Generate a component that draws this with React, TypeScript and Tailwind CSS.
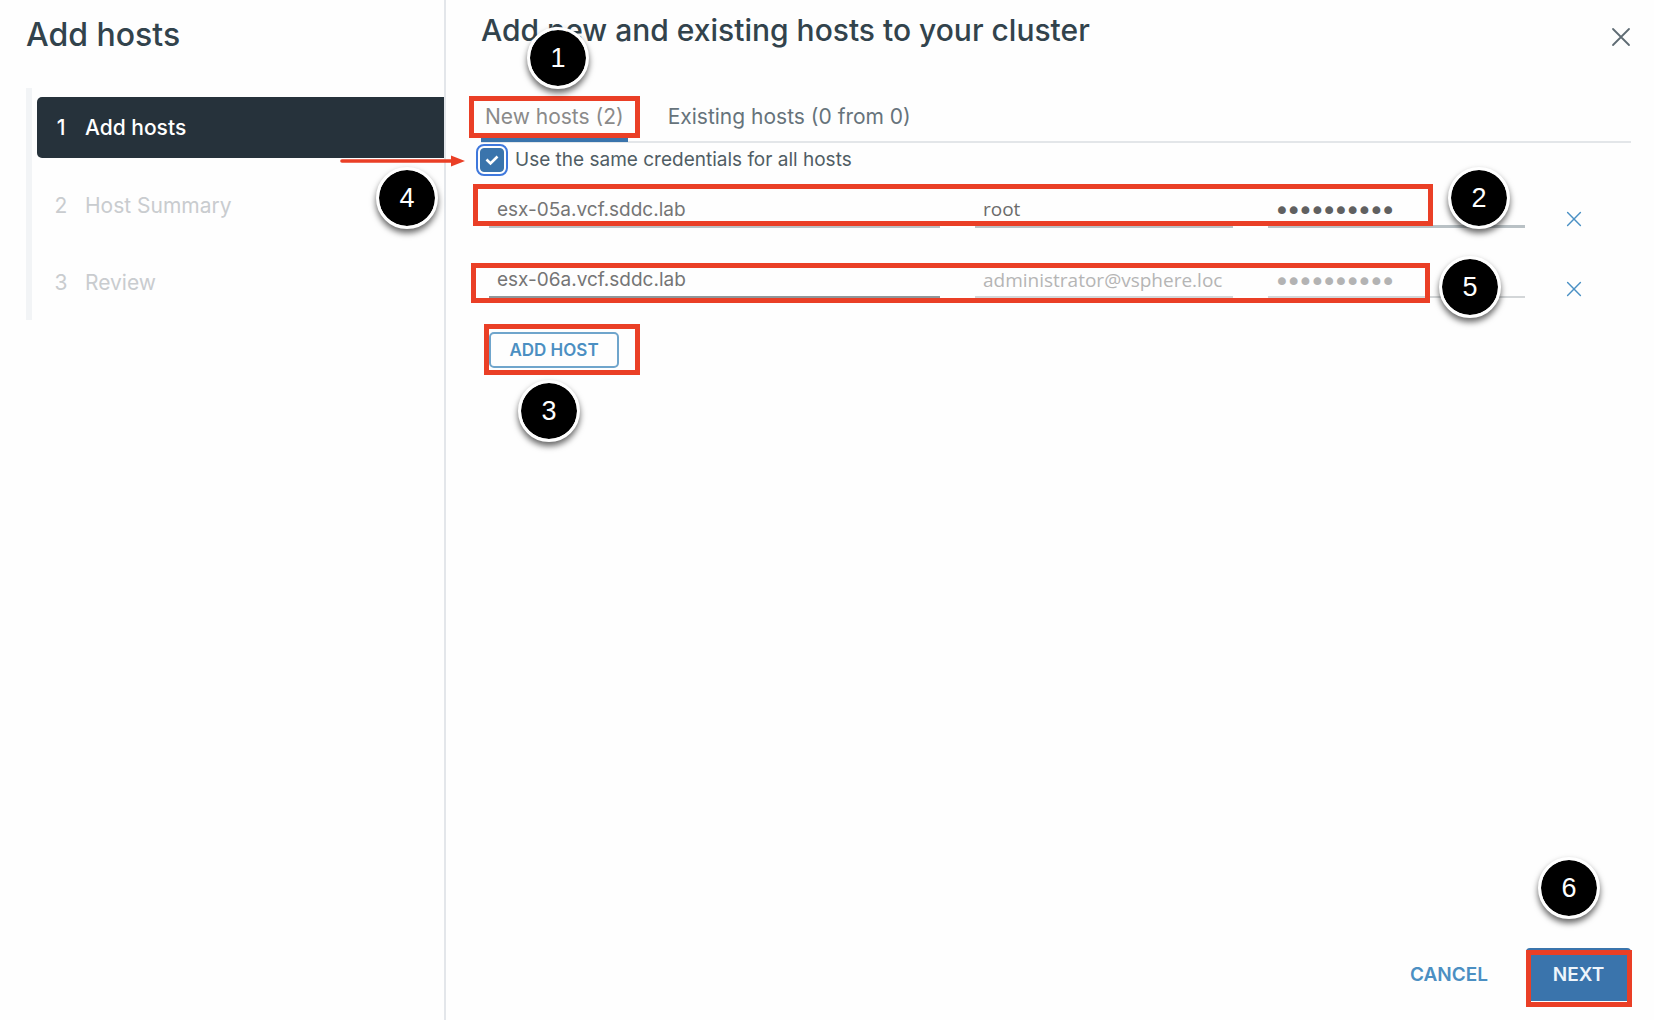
import { useState } from "react";

function Callout({ n, className }: { n: number; className: string }) {
  return (
    <span
      className={`absolute z-20 flex size-[62px] items-center justify-center rounded-full border-[3px] border-white bg-black bg-clip-padding pt-px font-['Liberation_Sans',Arial,sans-serif] text-[27px] leading-none font-normal text-white shadow-[0_4px_6px_rgba(0,0,0,0.6)] ${className}`}
    >
      {n}
    </span>
  );
}

function Outline({ className }: { className: string }) {
  return (
    <span
      aria-hidden="true"
      className={`pointer-events-none absolute z-10 border-[5px] border-[#ea3f26] ${className}`}
    />
  );
}

function Cross({ className }: { className: string }) {
  return (
    <svg viewBox="0 0 20 20" className={className} fill="none" stroke="currentColor" strokeLinecap="round" aria-hidden="true">
      <path d="M2 2L18 18M18 2L2 18" />
    </svg>
  );
}

const steps = ["Add hosts", "Host Summary", "Review"];

type Host = { name: string; user: string; password: string; inherited: boolean };

const initialHosts: Host[] = [
  { name: "esx-05a.vcf.sddc.lab", user: "root", password: "Password1!", inherited: false },
  { name: "esx-06a.vcf.sddc.lab", user: "", password: "", inherited: true },
];

function HostRow({ host, index, onRemove }: { host: Host; index: number; onRemove: () => void }) {
  const field = "h-[47px] w-full min-w-0 rounded-none bg-transparent pr-2.5 pl-2 outline-none placeholder:opacity-100";
  const line = host.inherited ? "border-b-2 border-[#d3d6d8]" : "border-b-[3px] border-[#b9c1c5]";
  const nameLine = host.inherited ? "border-b-2 border-[#8f979b]" : "border-b-[3px] border-[#b9c1c5]";
  return (
    <div className="relative grid h-[70px] grid-cols-[451fr_258fr_257fr_71fr] items-start gap-x-[35px]">
      <input
        aria-label={`Host ${index + 1} name`}
        defaultValue={host.name}
        className={`${field} ${nameLine} pt-3 font-['Inter',sans-serif] text-[19px] text-[#757575]`}
      />
      <input
        aria-label={`Host ${index + 1} user name`}
        defaultValue={host.user}
        placeholder="administrator@vsphere.local"
        disabled={host.inherited}
        className={`${field} ${line} pt-3 font-['Open_Sans',sans-serif] text-[19px] text-[#6b6b6b] placeholder:text-[#b5b5b5]`}
      />
      <input
        type="password"
        aria-label={`Host ${index + 1} password`}
        defaultValue={host.inherited ? "Password1!" : host.password}
        disabled={host.inherited}
        className={`${field} ${line} pt-3.5 font-['DejaVu_Sans',sans-serif] text-[20px] [-webkit-text-stroke:2px] ${host.inherited ? "text-[#b3b3b3]" : "text-[#606060]"}`}
      />
      <button
        type="button"
        aria-label={`Remove host ${index + 1}`}
        onClick={onRemove}
        className="mt-6 flex size-7 items-center justify-center text-[#4a90c4]"
      >
        <Cross className="size-4 stroke-[1.8]" />
      </button>
      {index === 0 && (
        <>
          <Outline className="top-[3px] -left-4 right-[198px] h-[42px]" />
          <Callout n={2} className="-top-3.5 right-[121px]" />
        </>
      )}
      {index === 1 && (
        <>
          <Outline className="top-3 -left-[18px] right-[201px] h-10" />
          <Callout n={5} className="top-[5px] right-[130px]" />
        </>
      )}
    </div>
  );
}

export default function App() {
  const [same, setSame] = useState(true);
  const [hosts, setHosts] = useState(initialHosts);

  return (
    <div className="flex min-h-screen bg-[#fefefe] font-['Inter',sans-serif] text-[#32434c]">
      <aside className="w-[446px] shrink-0 border-r-2 border-[#e3e6ea] pl-[26px]">
        <h1 className="pt-4 text-[32px] leading-[38px] font-medium">Add hosts</h1>
        <ol className="relative mt-[34px] flex h-[232px] flex-col gap-4 border-l-[6px] border-[#f2f4f6] pt-[9px] pl-[5px]">
          {steps.map((s, i) => (
            <li key={s}>
              <button
                type="button"
                disabled={i > 0}
                className={
                  i === 0
                    ? "flex h-[61px] w-full items-center rounded-l-[5px] bg-[#26323b] text-left text-[21px] font-medium text-white"
                    : "flex h-[61px] w-full items-center pt-0.5 text-left text-[21px] text-[#c9cccf]"
                }
              >
                <span className="w-12 px-4 text-center">{i + 1}</span>
                <span>{s}</span>
              </button>
            </li>
          ))}
          <Callout n={4} className="top-[79px] right-1.5" />
        </ol>
      </aside>

      <main className="flex min-w-0 flex-1 flex-col pr-[23px] pl-[35px]">
        <header className="relative flex h-[97px] items-start justify-between">
          <h2 className="pt-[11px] text-[30px] leading-[38px] font-medium">
            Add new and existing hosts to your cluster
          </h2>
          <button type="button" aria-label="Close" className="mt-[27px] text-[#5e6b73]">
            <Cross className="size-5 stroke-[1.8]" />
          </button>
          <Callout n={1} className="top-[27px] left-[46px]" />
        </header>

        <div role="tablist" className="flex h-[46px] gap-10 border-b-2 border-[#e3e6e9] text-[21px] text-[#66737b]">
          <button type="button" role="tab" aria-selected="true" className="relative h-[45px] border-b-4 border-[#3a74ac] px-1 pb-0.5 text-[#8a8a8a]">
            New hosts (2)
            <Outline className="-top-px -right-3 -left-3 h-[42px]" />
          </button>
          <button type="button" role="tab" aria-selected="false" className="h-[41px] pb-0.5">
            Existing hosts (0 from 0)
          </button>
        </div>

        <div className="relative flex h-[38px] items-start">
          <label className="flex h-[34px] items-center text-[19px] text-[#505d64]">
            <span className="relative mr-2 -ml-1 flex size-[30px] items-center justify-center">
              <input
                type="checkbox"
                checked={same}
                onChange={(e) => setSame(e.target.checked)}
                className="size-6 appearance-none rounded-[4px] border border-[#3a74ac] checked:bg-[#3a74ac] outline-2 outline-offset-2 outline-[#3f78dc]"
              />
              {same && (
                <svg viewBox="0 0 14 12" className="pointer-events-none absolute h-3 w-3.5" fill="none" stroke="white" strokeWidth="2.6" aria-hidden="true">
                  <path d="M1.5 5.5L5.5 9.5L12.5 2.5" />
                </svg>
              )}
            </span>
            Use the same credentials for all hosts
          </label>
          <svg viewBox="0 0 125 12" className="pointer-events-none absolute top-3 -left-[141px] z-10 h-3 w-[125px]" aria-hidden="true">
            <path d="M2 6H114" stroke="#ea3f26" strokeWidth="3.6" strokeLinecap="round" />
            <path d="M111 0.5L125 6L111 11.5Z" fill="#ea3f26" />
          </svg>
        </div>

        <div className="pl-2">
          {hosts.map((h, i) => (
            <HostRow
              key={h.name}
              host={h}
              index={i}
              onRemove={() => setHosts((hs) => hs.filter((x) => x !== h))}
            />
          ))}
          <div className="relative mt-[11px] w-fit">
            <button
              type="button"
              onClick={() => setHosts((hs) => [...hs, { name: "", user: "", password: "", inherited: same }])}
              className="flex h-9 w-[130px] items-center justify-center rounded-[5px] border-2 border-[#6fa5cc] pt-0.5 text-[17px] font-semibold text-[#4b8fc2]"
            >
              ADD HOST
            </button>
            <Outline className="-top-2 -right-[21px] -left-[5px] h-[51px]" />
            <Callout n={3} className="top-12 left-[29px]" />
          </div>
        </div>

        <footer className="mt-auto flex items-center justify-end gap-[38px] pb-[19px] text-[19px] font-semibold">
          <button type="button" className="pt-0.5 text-[#4b8fc2]">CANCEL</button>
          <div className="relative">
            <button type="button" className="flex h-[53px] w-[105px] items-center justify-center rounded-[4px] bg-[#3a74ac] pt-0.5 text-[#eef5fb]">
              NEXT
            </button>
            <Outline className="top-0.5 -right-px left-0 h-[57px]" />
            <Callout n={6} className="-top-[91px] left-3" />
          </div>
        </footer>
      </main>
    </div>
  );
}
